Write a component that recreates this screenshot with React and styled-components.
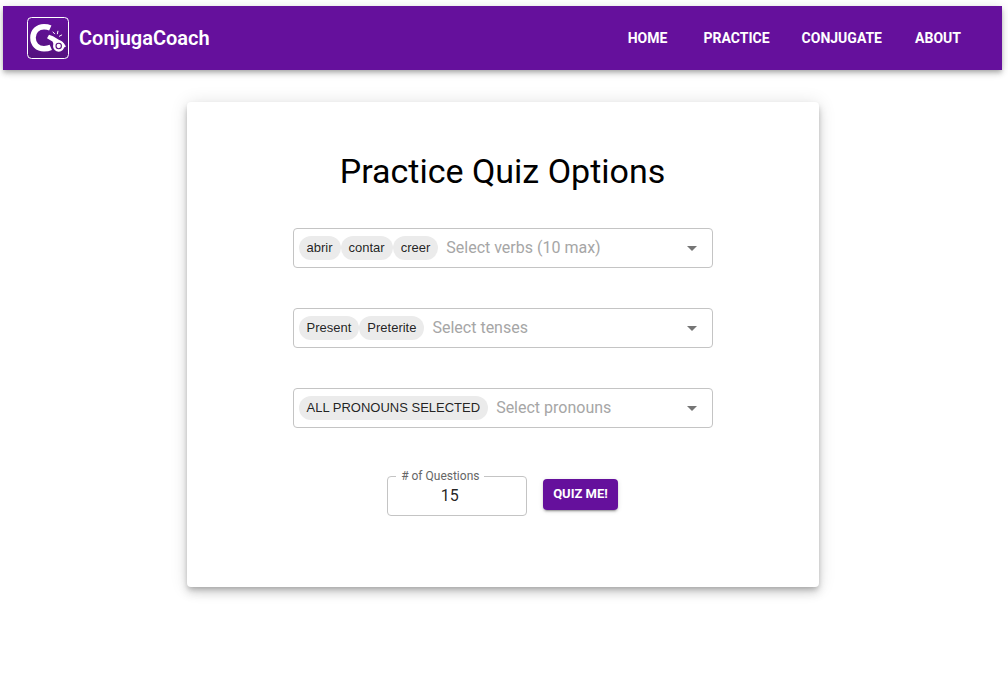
import React from "react";
import styled, { createGlobalStyle } from "styled-components";

const PURPLE = "#65109c";

const GlobalStyle = createGlobalStyle`
  *, *::before, *::after { box-sizing: border-box; }
  body {
    margin: 0;
    padding: 6px 6px 0 3px;
    background: #fff;
    color: #000;
    font-family: Roboto, "Liberation Sans", sans-serif;
    font-size: 16px;
  }
`;

const AppBar = styled.header`
  display: flex;
  align-items: center;
  justify-content: space-between;
  min-height: 64px;
  padding: 0 32px 0 24px;
  background: ${PURPLE};
  color: #fff;
  box-shadow: 0 2px 4px -1px rgba(0, 0, 0, 0.2), 0 4px 5px 0 rgba(0, 0, 0, 0.14),
    0 1px 10px 0 rgba(0, 0, 0, 0.12);
`;

const Brand = styled.a`
  display: flex;
  align-items: center;
  gap: 10px;
  color: inherit;
  font-size: 20px;
  font-weight: 600;
  line-height: 32px;
  text-decoration: none;
`;

const Logo = styled.svg`
  display: block;
  width: 42px;
  height: 42px;
`;

const Nav = styled.nav`
  display: flex;
  gap: 16px;
`;

const NavLink = styled.a`
  min-width: 64px;
  padding: 6px 8px;
  color: inherit;
  font-size: 14px;
  font-weight: 700;
  line-height: 24px;
  text-align: center;
  text-decoration: none;
  text-transform: uppercase;
`;

const Card = styled.main`
  display: flex;
  flex-direction: column;
  align-items: center;
  max-width: 632px;
  margin: 32px auto;
  padding: 48px 16px 71px;
  border-radius: 4px;
  background: #fff;
  box-shadow: 0 3px 5px -1px rgba(0, 0, 0, 0.2), 0 6px 10px 0 rgba(0, 0, 0, 0.14),
    0 1px 18px 0 rgba(0, 0, 0, 0.12);
`;

const Title = styled.h1`
  margin: 0 0 36px;
  font-size: 34px;
  font-weight: 400;
  line-height: 42px;
  text-align: center;
`;

const Form = styled.form`
  display: flex;
  flex-direction: column;
  align-items: center;
  gap: 40px;
  width: 100%;
  max-width: 420px;
`;

const Picker = styled.div`
  display: flex;
  align-items: center;
  width: 100%;
  height: 40px;
  padding: 0 8px 0 5px;
  border: 1px solid #c4c4c4;
  border-radius: 4px;
`;

const Chip = styled.span`
  flex: none;
  height: 24px;
  padding: 0 8px;
  border-radius: 12px;
  background: #ebebeb;
  color: rgba(0, 0, 0, 0.87);
  font-family: "Liberation Sans", Arial, sans-serif;
  font-size: 13px;
  line-height: 24px;
  white-space: nowrap;
`;

const PickerInput = styled.input`
  flex: 1;
  min-width: 0;
  padding: 0 8px 2px;
  border: 0;
  outline: 0;
  background: none;
  color: rgba(0, 0, 0, 0.87);
  font: inherit;

  &::placeholder {
    color: #a6a6a6;
    opacity: 1;
  }
`;

const ArrowButton = styled.button`
  flex: none;
  width: 24px;
  height: 24px;
  padding: 0;
  border: 0;
  background: none;
  color: #757575;

  svg {
    display: block;
  }
`;

const Actions = styled.div`
  display: flex;
  align-items: flex-start;
  gap: 16px;
  padding-top: 8px;
`;

const CountField = styled.div`
  position: relative;
  width: 140px;
`;

const CountLabel = styled.label`
  position: absolute;
  top: -8px;
  left: 9px;
  padding: 0 5px;
  background: #fff;
  color: #666;
  font-size: 12px;
  line-height: 16px;
  white-space: nowrap;
`;

const CountInput = styled.input`
  display: block;
  width: 100%;
  height: 40px;
  padding: 0 14px 2px;
  border: 1px solid #c4c4c4;
  border-radius: 4px;
  background: none;
  color: rgba(0, 0, 0, 0.87);
  font: inherit;
  text-align: center;
`;

const SubmitButton = styled.button`
  height: 31px;
  margin-top: 3px;
  padding: 0 10px 2px;
  border: 0;
  border-radius: 4px;
  background: ${PURPLE};
  color: #fff;
  font-family: inherit;
  font-size: 13px;
  font-weight: 700;
  text-transform: uppercase;
  box-shadow: 0 3px 1px -2px rgba(0, 0, 0, 0.2), 0 2px 2px 0 rgba(0, 0, 0, 0.14),
    0 1px 5px 0 rgba(0, 0, 0, 0.12);
`;

const NAV_ITEMS = ["Home", "Practice", "Conjugate", "About"];

const PICKERS = [
  { name: "verbs", placeholder: "Select verbs (10 max)", chips: ["abrir", "contar", "creer"] },
  { name: "tenses", placeholder: "Select tenses", chips: ["Present", "Preterite"] },
  { name: "pronouns", placeholder: "Select pronouns", chips: ["ALL PRONOUNS SELECTED"] },
];

function WhistleLogo() {
  return (
    <Logo viewBox="0 0 42 42" aria-hidden="true">
      <defs>
        <linearGradient id="tile" x1="0" y1="0" x2="0" y2="1">
          <stop offset="0" stopColor="#65109c" />
          <stop offset="1" stopColor="#54127e" />
        </linearGradient>
      </defs>
      <rect x="0.5" y="0.5" width="41" height="41" rx="4" fill="url(#tile)" stroke="#fff" />
      <path
        d="M23.3 11C21.5 10.2 19.2 9.800 17 9.800C10.600 9.800 6 14.200 6 20.800C6 27.400 10.600 31.700 17 31.700C19.500 31.700 21.800 31.300 23.800 30.400"
        fill="none"
        stroke="#fff"
        strokeWidth="5.600"
      />
      <path d="M20 21.300L22 17.800L26 19.300L33 23.400L37 26.500L39 29.600L36 31L27.200 28.500L25.500 24.500Z" fill="#fff" />
      <circle cx="31.700" cy="29" r="5.700" fill="#fff" />
      <circle cx="31.700" cy="29" r="2.700" fill="none" stroke="#5b117f" strokeWidth="1.100" />
      <path d="M26 15L27.600 16.800M30.900 14.200L30.400 16.800M34.700 18L32.400 19.200" stroke="#fff" strokeWidth="1" strokeLinecap="round" />
    </Logo>
  );
}

function ChipPicker({ name, placeholder, chips }) {
  return (
    <Picker>
      {chips.map((chip) => (
        <Chip key={chip}>{chip}</Chip>
      ))}
      <PickerInput role="combobox" aria-expanded="false" aria-label={name} name={name} placeholder={placeholder} />
      <ArrowButton type="button" aria-label={`Open ${name}`}>
        <svg width="24" height="24" viewBox="0 0 24 24" fill="currentColor">
          <path d="M7 10l5 5 5-5z" />
        </svg>
      </ArrowButton>
    </Picker>
  );
}

export default function App() {
  return (
    <>
      <GlobalStyle />
      <AppBar>
        <Brand href="#home">
          <WhistleLogo />
          ConjugaCoach
        </Brand>
        <Nav>
          {NAV_ITEMS.map((item) => (
            <NavLink key={item} href={`#${item.toLowerCase()}`}>
              {item}
            </NavLink>
          ))}
        </Nav>
      </AppBar>
      <Card>
        <Title>Practice Quiz Options</Title>
        <Form onSubmit={(event) => event.preventDefault()}>
          {PICKERS.map((picker) => (
            <ChipPicker key={picker.name} {...picker} />
          ))}
          <Actions>
            <CountField>
              <CountLabel htmlFor="question-count"># of Questions</CountLabel>
              <CountInput id="question-count" type="number" defaultValue="15" />
            </CountField>
            <SubmitButton type="submit">Quiz me!</SubmitButton>
          </Actions>
        </Form>
      </Card>
    </>
  );
}
